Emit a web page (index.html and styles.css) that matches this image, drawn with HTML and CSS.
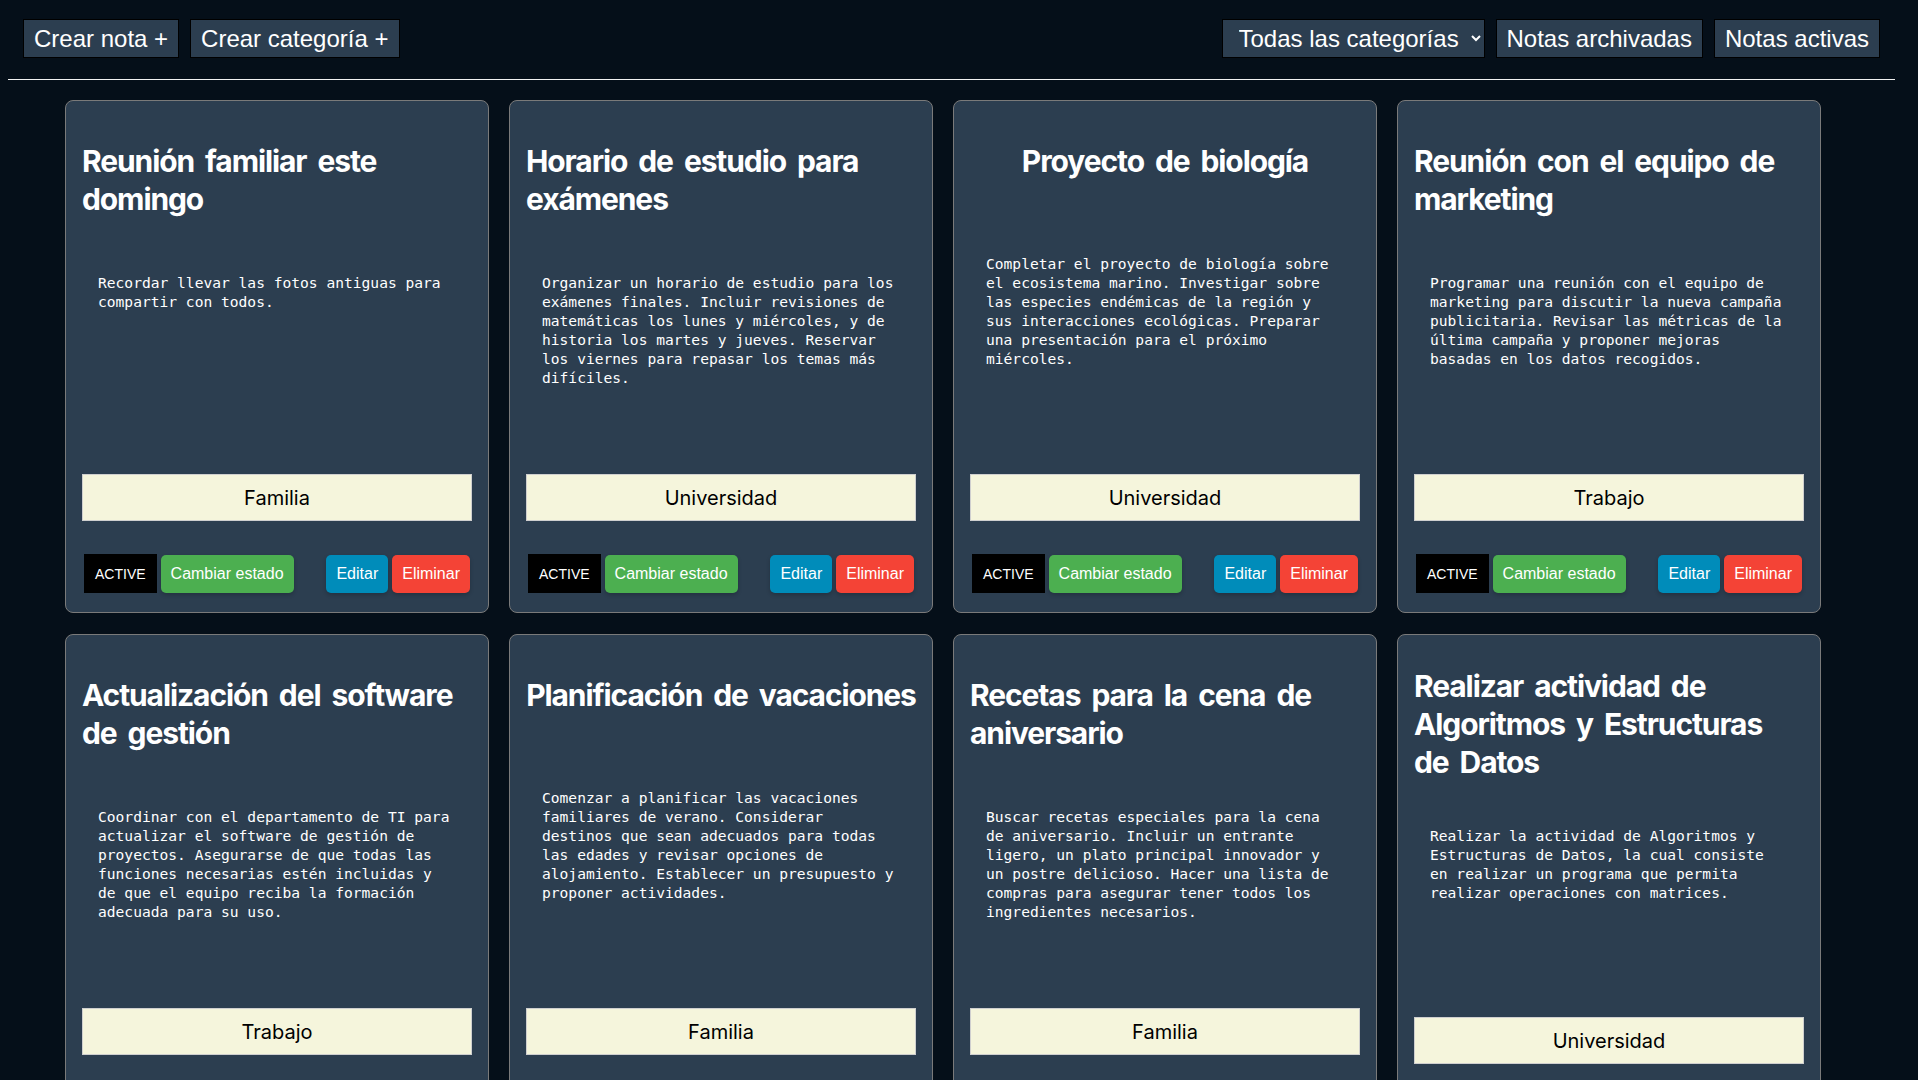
FILE: index.html
```html
<!DOCTYPE html>
<html lang="es">
<head>
<meta charset="utf-8">
<title>Notas</title>
<link rel="stylesheet" href="styles.css">
</head>
<body>
<header class="topbar">
  <div class="group">
    <button class="top-btn">Crear nota +</button>
    <button class="top-btn">Crear categoría +</button>
  </div>
  <div class="group">
    <select class="top-select">
      <option>Todas las categorías</option>
      <option>Familia</option>
      <option>Universidad</option>
      <option>Trabajo</option>
    </select>
    <button class="top-btn">Notas archivadas</button>
    <button class="top-btn">Notas activas</button>
  </div>
</header>
<div class="divider"></div>
<main class="grid">
  <article class="card">
    <h1 class="title">Reunión familiar este domingo</h1>
    <p class="desc">Recordar llevar las fotos antiguas para compartir con todos.</p>
    <div class="category">Familia</div>
    <div class="actions">
      <div class="left"><span class="state">ACTIVE</span><button class="btn green">Cambiar estado</button></div>
      <div class="right"><button class="btn blue">Editar</button><button class="btn red">Eliminar</button></div>
    </div>
  </article>
  <article class="card">
    <h1 class="title">Horario de estudio para exámenes</h1>
    <p class="desc">Organizar un horario de estudio para los exámenes finales. Incluir revisiones de matemáticas los lunes y miércoles, y de historia los martes y jueves. Reservar los viernes para repasar los temas más difíciles.</p>
    <div class="category">Universidad</div>
    <div class="actions">
      <div class="left"><span class="state">ACTIVE</span><button class="btn green">Cambiar estado</button></div>
      <div class="right"><button class="btn blue">Editar</button><button class="btn red">Eliminar</button></div>
    </div>
  </article>
  <article class="card">
    <h1 class="title">Proyecto de biología</h1>
    <p class="desc">Completar el proyecto de biología sobre el ecosistema marino. Investigar sobre las especies endémicas de la región y sus interacciones ecológicas. Preparar una presentación para el próximo miércoles.</p>
    <div class="category">Universidad</div>
    <div class="actions">
      <div class="left"><span class="state">ACTIVE</span><button class="btn green">Cambiar estado</button></div>
      <div class="right"><button class="btn blue">Editar</button><button class="btn red">Eliminar</button></div>
    </div>
  </article>
  <article class="card">
    <h1 class="title">Reunión con el equipo de marketing</h1>
    <p class="desc">Programar una reunión con el equipo de marketing para discutir la nueva campaña publicitaria. Revisar las métricas de la última campaña y proponer mejoras basadas en los datos recogidos.</p>
    <div class="category">Trabajo</div>
    <div class="actions">
      <div class="left"><span class="state">ACTIVE</span><button class="btn green">Cambiar estado</button></div>
      <div class="right"><button class="btn blue">Editar</button><button class="btn red">Eliminar</button></div>
    </div>
  </article>
  <article class="card">
    <h1 class="title">Actualización del software de gestión</h1>
    <p class="desc">Coordinar con el departamento de TI para actualizar el software de gestión de proyectos. Asegurarse de que todas las funciones necesarias estén incluidas y de que el equipo reciba la formación adecuada para su uso.</p>
    <div class="category">Trabajo</div>
    <div class="actions">
      <div class="left"><span class="state">ACTIVE</span><button class="btn green">Cambiar estado</button></div>
      <div class="right"><button class="btn blue">Editar</button><button class="btn red">Eliminar</button></div>
    </div>
  </article>
  <article class="card">
    <h1 class="title">Planificación de vacaciones</h1>
    <p class="desc">Comenzar a planificar las vacaciones familiares de verano. Considerar destinos que sean adecuados para todas las edades y revisar opciones de alojamiento. Establecer un presupuesto y proponer actividades.</p>
    <div class="category">Familia</div>
    <div class="actions">
      <div class="left"><span class="state">ACTIVE</span><button class="btn green">Cambiar estado</button></div>
      <div class="right"><button class="btn blue">Editar</button><button class="btn red">Eliminar</button></div>
    </div>
  </article>
  <article class="card">
    <h1 class="title">Recetas para la cena de aniversario</h1>
    <p class="desc">Buscar recetas especiales para la cena de aniversario. Incluir un entrante ligero, un plato principal innovador y un postre delicioso. Hacer una lista de compras para asegurar tener todos los ingredientes necesarios.</p>
    <div class="category">Familia</div>
    <div class="actions">
      <div class="left"><span class="state">ACTIVE</span><button class="btn green">Cambiar estado</button></div>
      <div class="right"><button class="btn blue">Editar</button><button class="btn red">Eliminar</button></div>
    </div>
  </article>
  <article class="card">
    <h1 class="title">Realizar actividad de Algoritmos y Estructuras de Datos</h1>
    <p class="desc">Realizar la actividad de Algoritmos y Estructuras de Datos, la cual consiste en realizar un programa que permita realizar operaciones con matrices.</p>
    <div class="category">Universidad</div>
    <div class="actions">
      <div class="left"><span class="state">ACTIVE</span><button class="btn green">Cambiar estado</button></div>
      <div class="right"><button class="btn blue">Editar</button><button class="btn red">Eliminar</button></div>
    </div>
  </article>
</main>
</body>
</html>
```
FILE: styles.css
```css
body {
  margin: 8px 23px 8px 8px;
  background: #050f19;
  color: #ffffff;
  font-family: "Liberation Sans", Arial, sans-serif;
}
.topbar {
  display: flex;
  justify-content: space-between;
  align-items: center;
  padding: 11px 15px 0;
}
.group {
  display: flex;
  gap: 11px;
}
.top-btn,
.top-select {
  font-family: "Liberation Sans", Arial, sans-serif;
  font-size: 24px;
  line-height: 27px;
  height: 39px;
  color: #ffffff;
  background: #2c3e50;
  border: 1px solid #000000;
  border-radius: 0;
  padding: 5px 10px;
  margin: 0;
}
.top-select {
  padding: 0 8px 0 12px;
}
.divider {
  height: 1px;
  background: #f2f2f2;
  margin-top: 21px;
}
.grid {
  display: grid;
  grid-template-columns: repeat(4, 424px);
  column-gap: 20px;
  row-gap: 21px;
  margin-top: 20px;
  padding-left: 57px;
}
.card {
  box-sizing: border-box;
  height: 513px;
  background: #2c3e50;
  border: 1px solid #7a7a7a;
  border-radius: 8px;
  padding: 0 16px;
  display: flex;
  flex-direction: column;
  justify-content: center;
}
.title {
  font-family: Inter, "Noto Sans", sans-serif;
  font-weight: 700;
  font-size: 30px;
  letter-spacing: -1.1px;
  word-spacing: 5px;
  line-height: 38px;
  margin: 41px auto 45px;
  flex-shrink: 0;
}
.desc {
  box-sizing: border-box;
  height: 191px;
  flex-shrink: 0;
  margin: auto 0;
  padding: 0 16px;
  font-family: "DejaVu Sans Mono", "Liberation Mono", monospace;
  font-size: 14.6px;
  line-height: 19px;
}
.category {
  box-sizing: border-box;
  height: 47px;
  flex-shrink: 0;
  margin-bottom: 33px;
  background: #f5f5dc;
  border: 1px solid #cfcfcf;
  color: #000000;
  font-family: Inter, "Noto Sans", sans-serif;
  font-size: 20px;
  display: flex;
  align-items: center;
  justify-content: center;
}
.actions {
  display: flex;
  justify-content: space-between;
  align-items: center;
  height: 39px;
  flex-shrink: 0;
  margin-bottom: 19px;
  padding: 0 2px;
}
.left,
.right {
  display: flex;
  align-items: center;
  gap: 4px;
}
.state {
  height: 39px;
  display: flex;
  align-items: center;
  padding: 0 11px;
  background: #000000;
  color: #ffffff;
  font-size: 14px;
}
.btn {
  height: 38px;
  padding: 0 10px;
  border: none;
  border-radius: 5px;
  color: #ffffff;
  font-family: "Liberation Sans", Arial, sans-serif;
  font-size: 16px;
  box-shadow: 0 2px 4px rgba(0, 0, 0, 0.2);
}
.green { background: #4caf50; }
.blue { background: #008cba; }
.red { background: #f44336; }
```
